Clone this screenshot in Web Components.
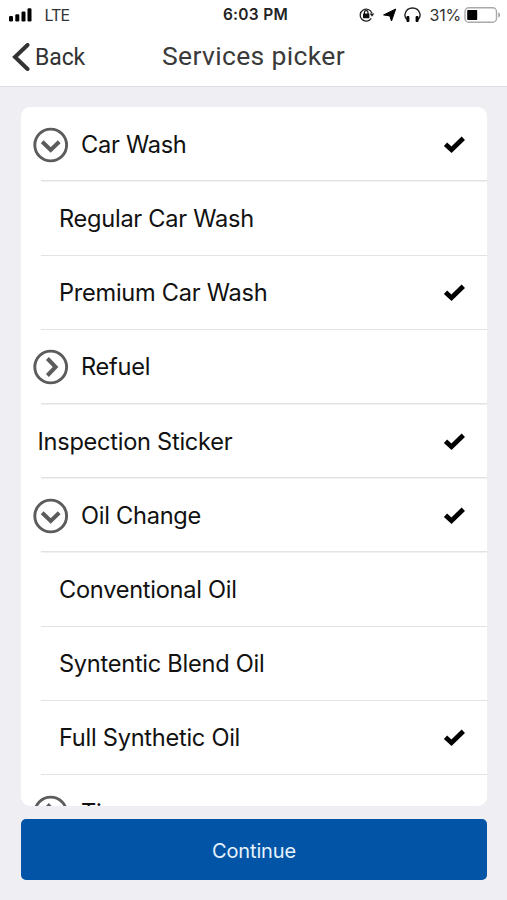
<!DOCTYPE html>
<html lang="en">
<head>
<meta charset="utf-8">
<title>Services picker</title>
<style>
html, body { margin: 0; height: 100%; }
body { background: #eeeef3; font-family: Inter, "Liberation Sans", sans-serif; overflow: hidden; }
</style>
</head>
<body>
<services-screen></services-screen>
<script>
class BaseElement extends HTMLElement {
  connectedCallback() {
    if (!this.shadowRoot) this.attachShadow({ mode: 'open' }).innerHTML = this.render();
  }
}

customElements.define('status-bar', class extends BaseElement {
  render() {
    return `<style>
      :host { display: grid; grid-template-columns: 1fr auto 1fr; align-items: center; height: 30px; color: #222; font-size: 15.5px; line-height: 30px; white-space: nowrap; }
      .left, .right { display: flex; align-items: center; }
      .left { padding-left: 8px; }
      .right { justify-content: flex-end; padding-right: 6px; color: #333; }
      .lte { margin-left: 12.5px; letter-spacing: -0.95px; font-size: 16px; color: #333; }
      .time { font-weight: 600; letter-spacing: 0.3px; padding-left: 4px; }
      .pct { margin: 0 3px 0 8px; font-size: 16px; letter-spacing: -0.2px; }
      svg { display: block; flex: none; }
    </style>
    <div class="left">
      <svg width="24" height="14" viewBox="0 0 24 14"><rect x="1" y="8" width="4" height="5.5" rx="1.3"/><rect x="7.3" y="6.3" width="4" height="7.2" rx="1.3"/><rect x="13.5" y="3.5" width="4" height="10" rx="1.3"/><rect x="19.5" y="0.3" width="4" height="13.2" rx="1.3"/></svg>
      <span class="lte">LTE</span>
    </div>
    <span class="time">6:03 PM</span>
    <div class="right">
      <svg width="16" height="16" viewBox="0 0 16 16"><path d="M12.2 11.400A6 6 0 1 1 12.900 6.300" fill="none" stroke="#222" stroke-width="1.300"/><path d="M10.600 6.400h4.800L13 9.800z" fill="#222"/><rect x="4" y="6.500" width="6.400" height="4.700" rx=".6" fill="#111"/><path d="M5.400 7V5.400a1.800 1.800 0 0 1 3.600 0V7" fill="none" stroke="#111" stroke-width="1.200"/></svg>
      <svg width="14" height="14" viewBox="0 0 14 14" style="margin-left:8px"><path d="M12.700 1 8.500 13 6.800 7.900.6 6.900z" stroke="#000" stroke-width="1" stroke-linejoin="round"/></svg>
      <svg width="17" height="16" viewBox="0 0 17 16" style="margin-left:7px"><path d="M3.200 12.800C.7 10.500.7 8 1.200 6.500 2.200 2.800 5 1 8.500 1s6.300 1.800 7.300 5.500c.5 1.500.5 4-2 6.300" fill="none" stroke="#222" stroke-width="1.400"/><rect x="2.500" y="9" width="2.900" height="6" rx="1"/><rect x="11.600" y="9" width="2.900" height="6" rx="1"/></svg>
      <span class="pct">31%</span>
      <svg width="37" height="16" viewBox="0 0 37 16"><rect x="1" y=".8" width="31.500" height="14.400" rx="3.800" fill="#fff" stroke="#aaa" stroke-width="1.400"/><rect x="3.200" y="3" width="10" height="10" rx=".8"/><path d="M34.300 5.500c2.300.6 2.300 4.400 0 5z" fill="#999"/></svg>
    </div>`;
  }
});

customElements.define('nav-bar', class extends BaseElement {
  render() {
    return `<style>
      :host { display: grid; grid-template-columns: 1fr auto 1fr; height: 57px; box-sizing: border-box; border-bottom: 1px solid #dedee2; font-family: Roboto, "Liberation Sans", sans-serif; color: #333; white-space: nowrap; }
      .back { display: flex; align-items: center; height: 54px; padding-left: 12px; gap: 5px; font-size: 23px; letter-spacing: -0.1px; }
      h1 { margin: 0; font-size: 26.5px; font-weight: 400; line-height: 52px; letter-spacing: 0.35px; color: #3a3a3a; }
      svg { display: block; }
    </style>
    <div class="back"><svg width="18" height="28" viewBox="0 0 18 28"><path d="M15.500 2 3 14l12.500 12" fill="none" stroke="#333" stroke-width="4" stroke-linecap="round"/></svg><span><slot name="back"></slot></span></div>
    <h1><slot></slot></h1>`;
  }
});

customElements.define('disclosure-icon', class extends BaseElement {
  render() {
    const turn = this.hasAttribute('open') ? 90 : 0;
    return `<style>:host { display: block; width: 36px; height: 36px; flex: none; } svg { display: block; }</style>
    <svg width="36" height="36" viewBox="0 0 36 36"><circle cx="17.700" cy="18" r="15.900" fill="none" stroke="#5c5c5c" stroke-width="2.900"/><path transform="rotate(${turn} 17.700 18)" d="M14.400 9.500 22.600 18l-8.200 8.500" fill="none" stroke="#5c5c5c" stroke-width="4"/></svg>`;
  }
});

customElements.define('service-row', class extends BaseElement {
  render() {
    const kind = this.getAttribute('kind');
    const icon = kind === 'open' || kind === 'closed';
    const pad = icon ? 12 : kind === 'child' ? 38 : 16.5;
    return `<style>
      :host { display: flex; flex: none; align-items: center; height: 74.200px; box-sizing: border-box; padding: 0 21px 0 ${pad}px; color: #111; font-size: 23.600px; white-space: nowrap;
        background: linear-gradient(#e3e3e5, #e3e3e5) 20px 100% / 100% 1.500px no-repeat; }
      .label { flex: 1; line-height: 30px; letter-spacing: -0.270px; }
      disclosure-icon { margin-right: 12px; }
      svg { display: block; flex: none; }
    </style>
    ${icon ? `<disclosure-icon ${kind === 'open' ? 'open' : ''}></disclosure-icon>` : ''}
    <span class="label"><slot></slot></span>
    ${this.hasAttribute('checked') ? '<svg width="23" height="18" viewBox="0 0 23 18"><path d="M2.500 8.300 8.500 13.700 20.300 2.200" fill="none" stroke="#000" stroke-width="4.800"/></svg>' : ''}`;
  }
});

customElements.define('service-list', class extends BaseElement {
  render() {
    return `<style>:host { display: flex; flex-direction: column; height: 699px; padding-top: 0.800px; box-sizing: border-box; overflow: hidden; border-radius: 9px; background: #fff; }</style><slot></slot>`;
  }
});

customElements.define('primary-button', class extends BaseElement {
  render() {
    return `<style>
      :host { display: block; height: 61px; }
      button { display: block; width: 100%; height: 100%; border: 0; padding: 2px 0 0; border-radius: 5px; background: #0255a6; color: #e6f2fb; font: 400 20px Inter, "Liberation Sans", sans-serif; letter-spacing: -0.150px; }
    </style><button type="button"><slot></slot></button>`;
  }
});

customElements.define('services-screen', class extends BaseElement {
  render() {
    return `<style>
      :host { display: flex; flex-direction: column; height: 900px; }
      header { background: #fff; }
      main { display: flex; flex-direction: column; gap: 13px; padding: 20px 20px 0 21px; }
    </style>
    <header><status-bar></status-bar><nav-bar><span slot="back">Back</span>Services picker</nav-bar></header>
    <main>
      <service-list>
        <service-row kind="open" checked>Car Wash</service-row>
        <service-row kind="child">Regular Car Wash</service-row>
        <service-row kind="child" checked>Premium Car Wash</service-row>
        <service-row kind="closed">Refuel</service-row>
        <service-row kind="leaf" checked>Inspection Sticker</service-row>
        <service-row kind="open" checked>Oil Change</service-row>
        <service-row kind="child">Conventional Oil</service-row>
        <service-row kind="child">Syntentic Blend Oil</service-row>
        <service-row kind="child" checked>Full Synthetic Oil</service-row>
        <service-row kind="closed">Tires</service-row>
      </service-list>
      <primary-button>Continue</primary-button>
    </main>`;
  }
});
</script>
</body>
</html>
